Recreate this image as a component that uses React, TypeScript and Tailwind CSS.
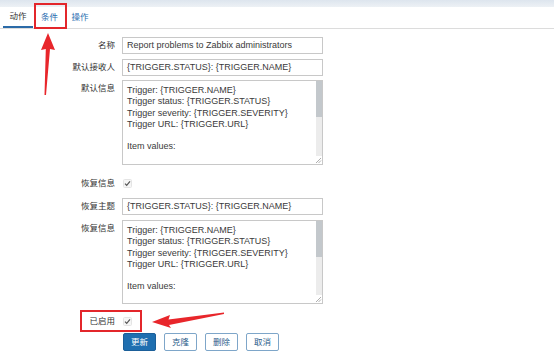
import React from "react";

const font = "font-['Liberation_Sans','Noto_Sans_CJK_SC',sans-serif]";

function Label({ children, top }: { children: React.ReactNode; top?: boolean }) {
  return (
    <div
      className={`w-[115px] shrink-0 text-right text-[8.5px] leading-[11px] text-[#333] ${
        top ? "pt-[3px] self-start" : "self-center"
      }`}
    >
      {children}
    </div>
  );
}

function Input({ value }: { value: string }) {
  return (
    <div className="ml-[7px] flex h-[17px] w-[201px] items-center border border-[#c8c8c8] bg-white pl-[4px] text-[9px] text-[#3a3a3a] whitespace-nowrap">
      {value}
    </div>
  );
}

function Check() {
  return (
    <svg width="9" height="9" viewBox="0 0 9 9" className="ml-[8px]">
      <rect x="0.5" y="0.5" width="8" height="8" rx="1" fill="#f6f6f6" stroke="#e4e4e4" />
      <path d="M2 4.6 L3.7 6.3 L7 2.4" fill="none" stroke="#555" strokeWidth="1.2" />
    </svg>
  );
}

function TextArea({ h }: { h: number }) {
  const lines = [
    "Trigger: {TRIGGER.NAME}",
    "Trigger status: {TRIGGER.STATUS}",
    "Trigger severity: {TRIGGER.SEVERITY}",
    "Trigger URL: {TRIGGER.URL}",
    "\u00a0",
    "Item values:",
  ];
  return (
    <div
      className="relative ml-[7px] w-[201px] overflow-hidden border border-[#c8c8c8] bg-white"
      style={{ height: h }}
    >
      <div className="pl-[4px] pt-[4px] text-[9px] leading-[11.3px] text-[#3a3a3a] whitespace-nowrap">
        {lines.map((l, i) => (
          <div key={i}>{l}</div>
        ))}
      </div>
      <div className="absolute right-0 top-0 bottom-0 w-[6px] bg-[#ececec]">
        <div className="h-[36px] w-full bg-[#c3c8cc]" />
      </div>
      <div className="absolute right-0 bottom-0 h-[8px] w-[8px] bg-white">
        <svg width="8" height="8" viewBox="0 0 8 8">
          <path d="M7 2 L2 7 M7 4.5 L4.5 7" stroke="#999" strokeWidth="0.8" />
        </svg>
      </div>
    </div>
  );
}

function Btn({ children, primary }: { children: React.ReactNode; primary?: boolean }) {
  return (
    <div
      className={`flex h-[18px] items-center justify-center rounded-[2px] border px-[7px] text-[8.5px] ${
        primary
          ? "border-[#1b5f99] bg-[#1f6fb0] text-white"
          : "border-[#7ea6c9] bg-white text-[#2b5d8a]"
      }`}
    >
      {children}
    </div>
  );
}

export default function App() {
  return (
    <div className={`relative h-[356px] w-[554px] overflow-hidden bg-white ${font}`}>
      <div className="h-[7px] bg-gradient-to-b from-[#dde5ee] to-[#edf1f5]" />
      <div className="flex h-[22px] items-stretch border-b border-[#dcdcdc] pl-[3px]">
        <div className="flex w-[30px] items-center justify-center border-b-2 border-[#2b6ba8] text-[8.5px] text-[#333]">
          动作
        </div>
        <div className="flex w-[33px] items-center justify-center text-[8.5px] text-[#2a6db0]">
          条件
        </div>
        <div className="flex w-[28px] items-center justify-center text-[8.5px] text-[#2a6db0]">
          操作
        </div>
      </div>

      <div className="flex flex-col pt-[8px]">
        <div className="flex">
          <Label>名称</Label>
          <Input value="Report problems to Zabbix administrators" />
        </div>
        <div className="mt-[5px] flex">
          <Label>默认接收人</Label>
          <Input value="{TRIGGER.STATUS}: {TRIGGER.NAME}" />
        </div>
        <div className="mt-[4px] flex">
          <Label top>默认信息</Label>
          <TextArea h={85} />
        </div>
        <div className="mt-[11px] flex h-[14px] items-center">
          <Label>恢复信息</Label>
          <Check />
        </div>
        <div className="mt-[8px] flex">
          <Label>恢复主题</Label>
          <Input value="{TRIGGER.STATUS}: {TRIGGER.NAME}" />
        </div>
        <div className="mt-[5px] flex">
          <Label top>恢复信息</Label>
          <TextArea h={84} />
        </div>
        <div className="mt-[10px] flex h-[14px] items-center">
          <Label>已启用</Label>
          <Check />
        </div>
        <div className="ml-[123px] mt-[5px] flex gap-[8px]">
          <Btn primary>更新</Btn>
          <Btn>克隆</Btn>
          <Btn>删除</Btn>
          <Btn>取消</Btn>
        </div>
      </div>

      {/* annotations */}
      <div className="absolute left-[34px] top-[3px] h-[26px] w-[33px] border-[2.5px] border-[#e3262b]" />
      <div className="absolute left-[80px] top-[310px] h-[22px] w-[62px] border-[2px] border-[#e3262b]" />
      <svg className="absolute left-0 top-0" width="554" height="356" viewBox="0 0 554 356">
        <polygon points="48,33 55,50 50,49 46,95 44.5,95 45.8,49 41,50" fill="#e8262b" />
        <polygon points="152,322 170,315 168.5,319.5 224,312.5 224,314 169,325 171,328" fill="#e8262b" />
      </svg>
    </div>
  );
}
